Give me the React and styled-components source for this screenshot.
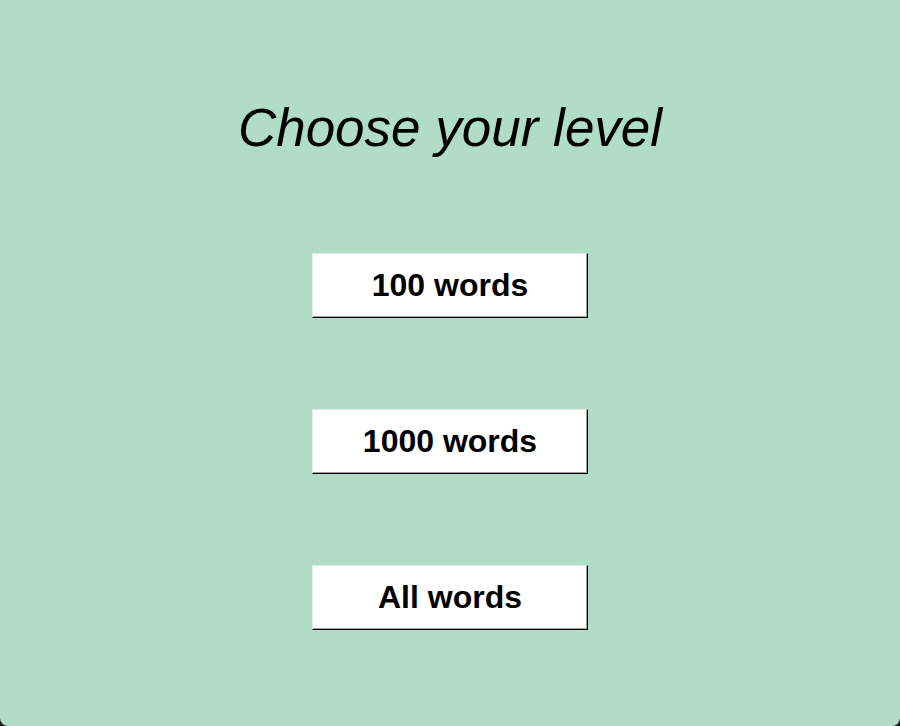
import React from "react";
import styled, { createGlobalStyle } from "styled-components";

const GlobalStyle = createGlobalStyle`
  html, body {
    margin: 0;
    padding: 0;
    background: #1c1c1c;
  }
`;

const Screen = styled.div`
  box-sizing: border-box;
  width: 900px;
  height: 726px;
  background: rgb(177, 220, 199);
  border-radius: 0 0 8px 8px;
  display: flex;
  flex-direction: column;
  align-items: center;
  font-family: "Liberation Sans", Arial, sans-serif;
  color: #000;
`;

const Title = styled.h1`
  font-size: 53px;
  font-weight: 400;
  font-style: italic;
  margin: 0;
  margin-top: 98px;
  line-height: 60px;
`;

const Levels = styled.div`
  display: flex;
  flex-direction: column;
  align-items: center;
  gap: 91px;
  margin-top: 95px;
`;

const LevelButton = styled.button`
  box-sizing: border-box;
  width: 276px;
  height: 65px;
  margin: 0;
  padding: 0;
  background: #fff;
  border: none;
  border-top: 1px solid #e6e6e6;
  border-left: 1px solid #e6e6e6;
  border-right: 1px solid #000;
  border-bottom: 1px solid #000;
  box-shadow: inset -1px -1px 0 #a0a0a0;
  font-family: "Liberation Sans", Arial, sans-serif;
  font-size: 32px;
  font-weight: 700;
  color: #000;
  cursor: pointer;
`;

const levels = ["100 words", "1000 words", "All words"];

const App = () => {
  return (
    <>
      <GlobalStyle />
      <Screen>
        <Title>Choose your level</Title>
        <Levels>
          {levels.map((level) => (
            <LevelButton key={level}>{level}</LevelButton>
          ))}
        </Levels>
      </Screen>
    </>
  );
};

export default App;
